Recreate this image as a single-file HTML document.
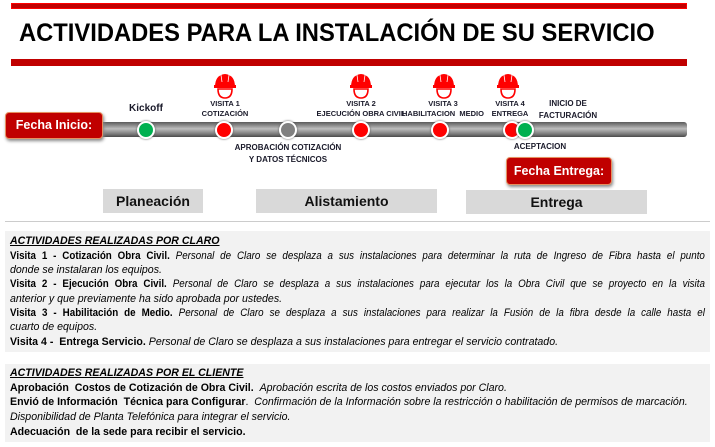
<!DOCTYPE html>
<html><head><meta charset="utf-8"><style>
*{margin:0;padding:0;box-sizing:border-box}
body{width:715px;height:447px;background:#fff;position:relative;overflow:hidden;font-family:"Liberation Sans",sans-serif}
.a{position:absolute}
.redl{background:#c00000}
.title{left:19px;top:19px;font-size:25px;font-weight:bold;color:#000;white-space:nowrap;transform:scaleX(0.95);transform-origin:left}
.bar{left:100px;top:122px;width:587px;height:15px;border-radius:3px;background:linear-gradient(#5a5a5a,#bdbdbd 45%,#7a7a7a 80%,#4a4a4a)}
.dot{width:18px;height:18px;border-radius:50%;border:2px solid #fff;box-shadow:0 0 2px #555}
.lbl{font-size:7.5px;font-weight:bold;color:#1a1a2a;text-align:center;white-space:nowrap;line-height:10px}
.btn{background:#c00000;color:#fff;font-weight:bold;font-size:12.5px;border-radius:4px;border:1px solid #e69060;box-shadow:1px 2px 3px #888;text-align:center}
.ph{background:#d9d9d9;font-weight:bold;font-size:14px;text-align:center;line-height:24px;color:#111}
.box{background:#f2f2f2;left:5px;width:705px}
.ln{position:absolute;left:10px;font-size:11.4px;line-height:14px;white-space:nowrap;transform:scaleX(0.93);transform-origin:left;color:#000}
.j{width:808px;text-align:justify;text-align-last:justify;white-space:normal;transform:scaleX(0.86)}
.ln i{font-style:italic}
.ln b{font-weight:bold}
</style></head><body>
<div class="a redl" style="left:11px;top:3px;width:676px;height:6px;border:1px solid #f00"></div>
<div class="a title">ACTIVIDADES PARA LA INSTALACIÓN DE SU SERVICIO</div>
<div class="a redl" style="left:11px;top:59px;width:676px;height:7px"></div>

<div class="a bar"></div>
<div class="a btn" style="left:5px;top:112px;width:98px;height:27px;line-height:25px">Fecha Inicio:</div>

<svg class="a" style="left:0;top:0" width="715" height="110">
<defs><g id="h"><path d="M-10 2 Q-10 -10 0 -11 Q10 -10 10 2 Z" fill="#f00"/><rect x="-11" y="0" width="22" height="3" fill="#f00"/><path d="M-7 4 Q-7 13 0 13 Q7 13 7 4 Z" fill="#fff" stroke="#f00" stroke-width="1.6"/><path d="M-4 -10 L-3 -3 M4 -10 L3 -3" stroke="#fff" stroke-width="0.8"/></g></defs>
<use href="#h" x="225" y="85"/><use href="#h" x="361" y="85"/><use href="#h" x="444" y="85"/><use href="#h" x="508" y="85"/>
</svg>

<div class="a lbl" style="left:126px;top:104px;font-size:10px;width:40px">Kickoff</div>
<div class="a lbl" style="left:195px;top:99px;width:60px">VISITA 1<br>COTIZACIÓN</div>
<div class="a lbl" style="left:311px;top:99px;width:100px">VISITA 2<br>EJECUCIÓN OBRA CIVIL</div>
<div class="a lbl" style="left:400px;top:99px;width:86px">VISITA 3<br>HABILITACION&nbsp; MEDIO</div>
<div class="a lbl" style="left:486px;top:99px;width:48px">VISITA 4<br>ENTREGA</div>
<div class="a lbl" style="left:528px;top:98px;width:80px;font-size:8px;line-height:12px">INICIO DE<br>FACTURACIÓN</div>
<div class="a lbl" style="left:228px;top:142px;width:120px;font-size:8px;line-height:12px">APROBACIÓN COTIZACIÓN<br>Y DATOS TÉCNICOS</div>
<div class="a lbl" style="left:510px;top:142px;width:60px;font-size:8px">ACEPTACION</div>

<div class="a dot" style="left:137px;top:121px;background:#00b050"></div>
<div class="a dot" style="left:215px;top:121px;background:#f00"></div>
<div class="a dot" style="left:279px;top:121px;background:#808080"></div>
<div class="a dot" style="left:352px;top:121px;background:#f00"></div>
<div class="a dot" style="left:431px;top:121px;background:#f00"></div>
<div class="a dot" style="left:503px;top:121px;background:#f00"></div>
<div class="a dot" style="left:516px;top:121px;background:#00b050"></div>

<div class="a btn" style="left:506px;top:157px;width:106px;height:28px;line-height:26px">Fecha Entrega:</div>

<div class="a ph" style="left:103px;top:189px;width:100px">Planeación</div>
<div class="a ph" style="left:256px;top:189px;width:181px">Alistamiento</div>
<div class="a ph" style="left:466px;top:190px;width:181px">Entrega</div>
<div class="a" style="left:5px;top:221px;width:705px;height:1px;background:#ccc"></div>

<div class="a box" style="top:231px;height:121px"></div>
<div class="a box" style="top:364px;height:78px"></div>

<div class="ln" style="top:234px"><b><i><u>ACTIVIDADES REALIZADAS POR CLARO</u></i></b></div>
<div class="ln j" style="top:249px"><b>Visita 1 - Cotización Obra Civil.</b> <i>Personal de Claro se desplaza a sus instalaciones para determinar la ruta de Ingreso de Fibra hasta el punto</i></div>
<div class="ln" style="top:263px"><i>donde se instalaran los equipos.</i></div>
<div class="ln j" style="top:277px"><b>Visita 2 - Ejecución Obra Civil.</b> <i>Personal de Claro se desplaza a sus instalaciones para ejecutar los la Obra Civil que se proyecto en la visita</i></div>
<div class="ln" style="top:292px"><i>anterior y que previamente ha sido aprobada por ustedes.</i></div>
<div class="ln j" style="top:306px"><b>Visita 3 - Habilitación de Medio.</b> <i>Personal de Claro se desplaza a sus instalaciones para realizar la Fusión de la fibra desde la calle hasta el</i></div>
<div class="ln" style="top:320px"><i>cuarto de equipos.</i></div>
<div class="ln" style="top:335px"><b>Visita 4 -&nbsp; Entrega Servicio.</b> <i>Personal de Claro se desplaza a sus instalaciones para entregar el servicio contratado.</i></div>

<div class="ln" style="top:366px"><b><i><u>ACTIVIDADES REALIZADAS POR EL CLIENTE</u></i></b></div>
<div class="ln" style="top:381px"><b>Aprobación&nbsp; Costos de Cotización de Obra Civil.</b>&nbsp; <i>Aprobación escrita de los costos enviados por Claro.</i></div>
<div class="ln" style="top:395px"><b>Envió de Información&nbsp; Técnica para Configurar</b>.&nbsp; <i>Confirmación de la Información sobre la restricción o habilitación de permisos de marcación.</i></div>
<div class="ln" style="top:410px"><i>Disponibilidad de Planta Telefónica para integrar el servicio.</i></div>
<div class="ln" style="top:425px"><b>Adecuación&nbsp; de la sede para recibir el servicio.</b></div>
</body></html>
